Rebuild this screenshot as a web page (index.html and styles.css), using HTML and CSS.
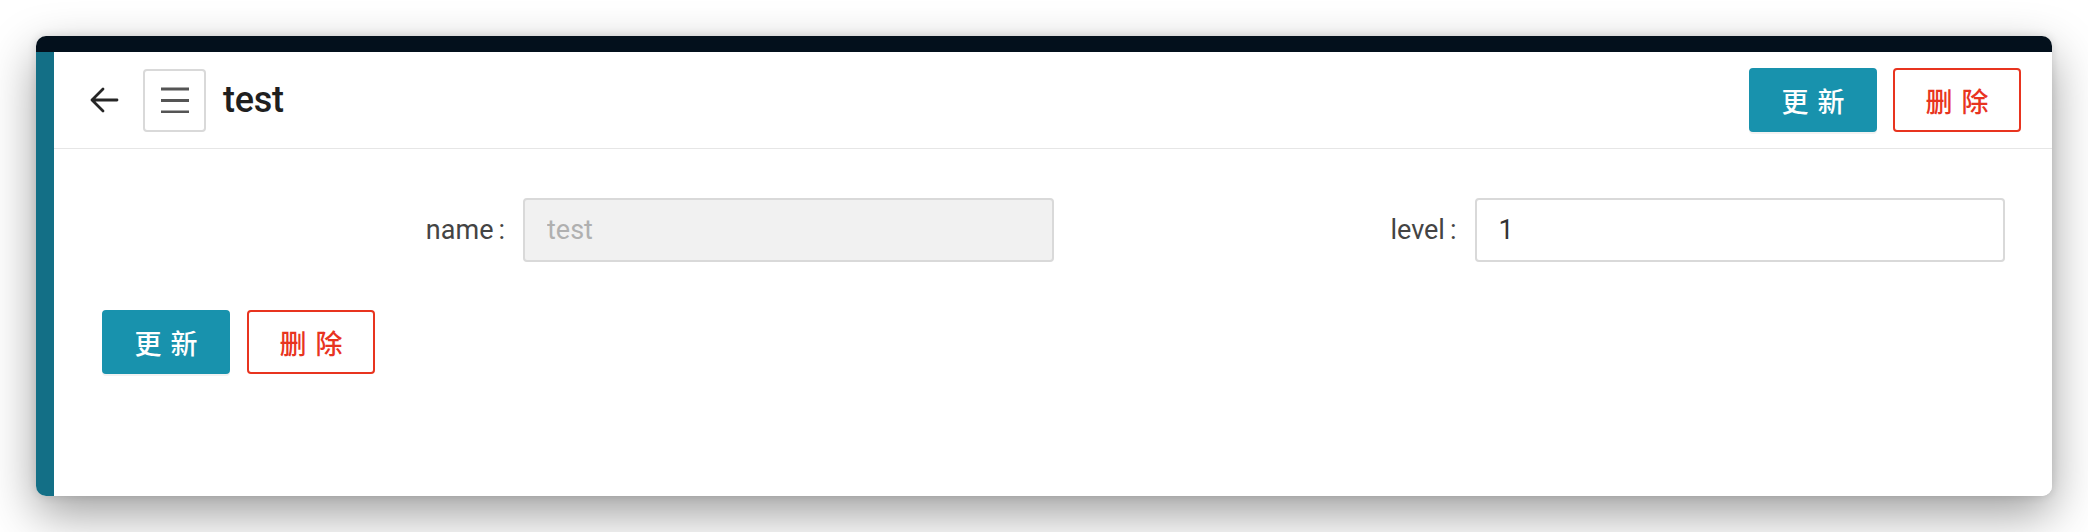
FILE: index.html
```html
<!DOCTYPE html>
<html lang="zh">
<head>
<meta charset="utf-8">
<title>test</title>
<link rel="stylesheet" href="styles.css">
</head>
<body>
<div class="window">
  <div class="titlebar"></div>
  <div class="main">
    <div class="sidebar"></div>
    <div class="content">
      <div class="page-header">
        <div class="header-left">
          <span class="back">
            <svg viewBox="0 0 32 32" width="32" height="32"><path d="M29 16H4M15 5L4 16l11 11" fill="none" stroke="#262626" stroke-width="2.8" stroke-linecap="round" stroke-linejoin="round"/></svg>
          </span>
          <span class="menu-btn">
            <svg viewBox="0 0 30 26" width="30" height="26"><path d="M1 2h28M1 13.5h28M1 25h28" stroke="#555" stroke-width="3"/></svg>
          </span>
          <span class="title">test</span>
        </div>
        <div class="actions">
          <button class="btn btn-primary">更新</button>
          <button class="btn btn-danger">删除</button>
        </div>
      </div>
      <div class="form">
        <div class="form-row">
          <div class="field">
            <label class="label">name<span class="colon">:</span></label>
            <input class="input input-disabled" value="test" disabled>
          </div>
          <div class="field">
            <label class="label">level<span class="colon">:</span></label>
            <input class="input" value="1">
          </div>
        </div>
        <div class="form-actions">
          <button class="btn btn-primary">更新</button>
          <button class="btn btn-danger">删除</button>
        </div>
      </div>
    </div>
  </div>
</div>
</body>
</html>
```

FILE: styles.css
```css
* { box-sizing: border-box; }
html, body { margin: 0; padding: 0; background: #ffffff; }
body {
  font-family: Roboto, "Noto Sans CJK SC", sans-serif;
  padding: 36px 36px 0 36px;
  min-height: 532px;
}
.window {
  width: 2016px;
  height: 460px;
  border-radius: 10px;
  overflow: hidden;
  display: flex;
  flex-direction: column;
  box-shadow: 0 18px 48px rgba(0,0,0,0.38), 0 0 10px rgba(0,0,0,0.12);
  background: #fff;
}
.titlebar { height: 16px; background: #03101c; flex: none; }
.main { flex: 1; display: flex; }
.sidebar { width: 18px; background: #136f86; flex: none; }
.content { flex: 1; background: #fff; }

.page-header {
  height: 97px;
  border-bottom: 1px solid #e6e6e6;
  display: flex;
  align-items: center;
  justify-content: space-between;
  padding: 0 31px 0 34px;
}
.header-left { display: flex; align-items: center; }
.back { width: 32px; height: 32px; display: flex; margin-right: 23px; }
.menu-btn {
  width: 63px; height: 63px;
  border: 2px solid #d9d9d9;
  border-radius: 4px;
  display: flex; align-items: center; justify-content: center;
  margin-right: 17px;
}
.title {
  font-size: 36px;
  font-weight: 500;
  color: #1f1f1f;
  letter-spacing: -0.3px;
}
.actions { display: flex; gap: 16px; }

.btn {
  width: 128px;
  height: 64px;
  border-radius: 4px;
  font-family: "Noto Sans CJK SC", sans-serif;
  font-size: 27px;
  font-weight: 500;
  letter-spacing: 0.34em;
  text-indent: 0.34em;
  padding: 0;
  cursor: pointer;
}
.btn-primary {
  background: #1892ad;
  border: 2px solid #1892ad;
  color: #fff;
  box-shadow: 0 2px 0 rgba(0,0,0,0.05);
}
.btn-danger {
  background: #fff;
  border: 2px solid #e8341f;
  color: #e8341f;
}

.form { padding: 49px 47px 0 48px; }
.form-row { display: grid; grid-template-columns: 1fr 1fr; }
.field { display: grid; grid-template-columns: 421px 1fr; align-items: center; }
.label {
  text-align: right;
  padding-right: 18px;
  font-size: 27px;
  color: #444;
}
.colon { margin-left: 5px; }
.input {
  height: 64px;
  border: 2px solid #d9d9d9;
  border-radius: 4px;
  padding: 0 22px;
  font-family: Roboto, sans-serif;
  font-size: 27px;
  color: #333;
  background: #fff;
  width: 100%;
}
.input-disabled { background: #f1f1f1; color: #b0b0b0; }
.form-actions { display: flex; gap: 17px; margin-top: 48px; }
```
